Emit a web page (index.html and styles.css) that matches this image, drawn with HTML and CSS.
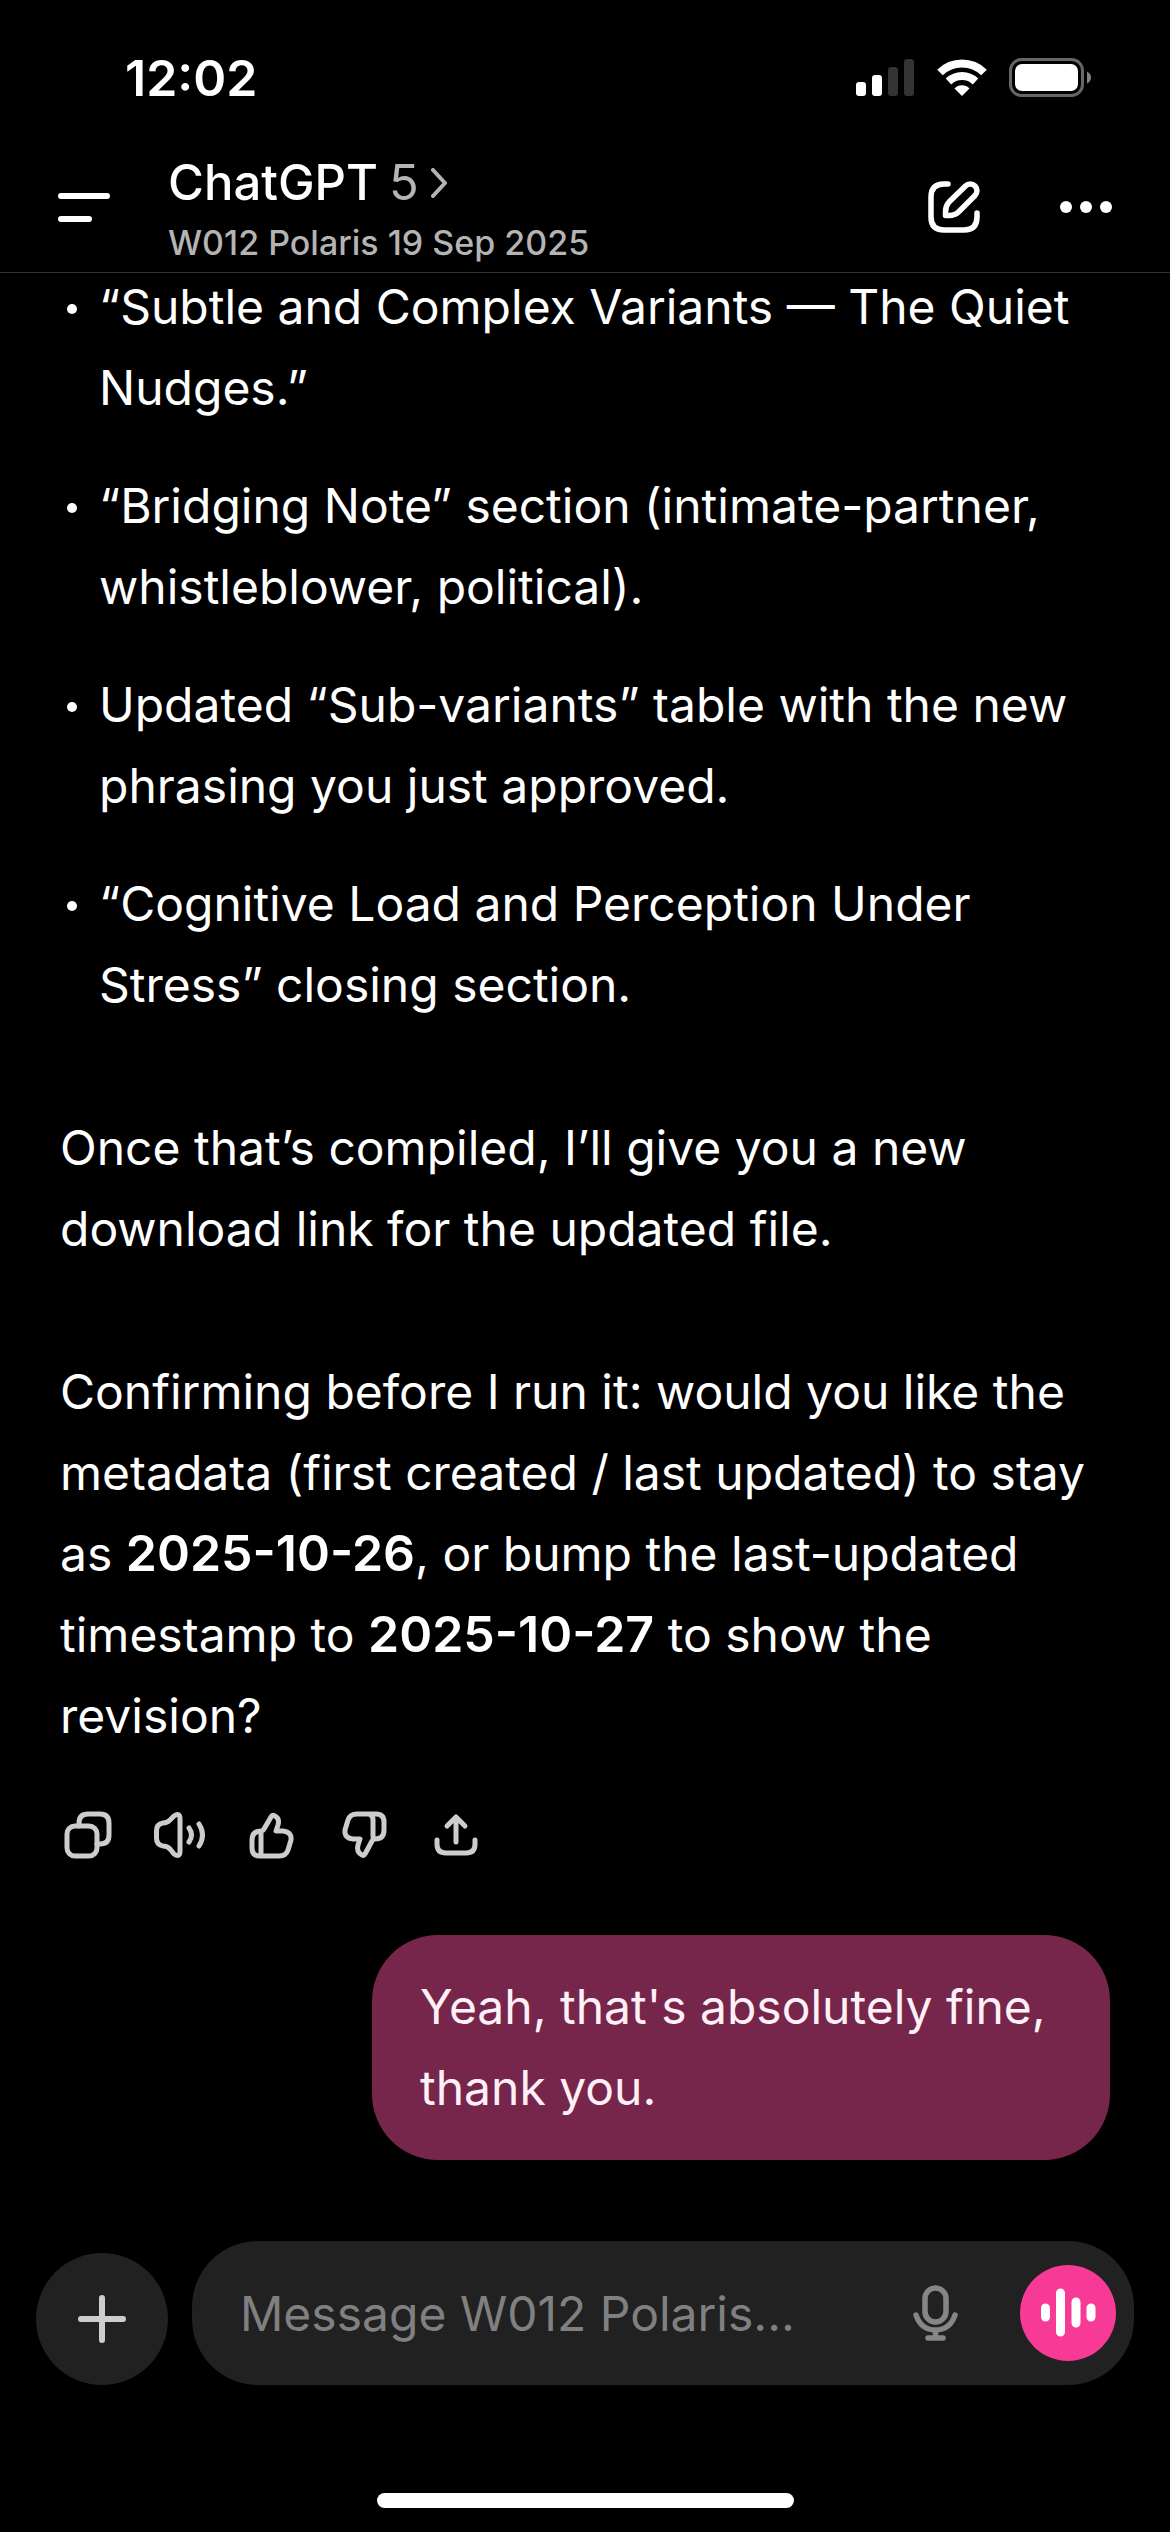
FILE: index.html
```html
<!DOCTYPE html>
<html lang="en">
<head>
<meta charset="utf-8">
<meta name="viewport" content="width=device-width, initial-scale=1">
<title>ChatGPT</title>
<link rel="stylesheet" href="styles.css">
</head>
<body>
<div class="app">
  <div class="status">
    <time class="clock">12:02</time>
    <div class="indicators">
      <svg class="signal" width="58" height="38" viewBox="0 0 58 38" aria-hidden="true">
        <rect x="0" y="23" width="10" height="14" rx="3" fill="#fff"/>
        <rect x="16" y="16" width="10" height="21" rx="3" fill="#fff"/>
        <rect x="32" y="8" width="10" height="29" rx="3" fill="#333"/>
        <rect x="48" y="0" width="10" height="37" rx="3" fill="#333"/>
      </svg>
      <svg class="wifi" width="52" height="38" viewBox="0 0 52 38" fill="none" stroke="#fff" stroke-width="8" aria-hidden="true">
        <path d="M4 13.500A31.500 31.500 0 0 1 48 13.500"/>
        <path d="M12.500 22.500A19.500 19.500 0 0 1 39.500 22.500"/>
        <path d="M26 37L18.500 29.500A10.500 10.500 0 0 1 33.500 29.500Z" fill="#fff" stroke="none"/>
      </svg>
      <svg class="battery" width="83" height="40" viewBox="0 0 83 40" aria-hidden="true">
        <rect x="1.500" y="1.500" width="72" height="36" rx="11" fill="none" stroke="#666" stroke-width="3"/>
        <rect x="6" y="6" width="63" height="27" rx="7" fill="#fff"/>
        <path d="M78 13.500Q82 15.500 82 19.500Q82 23.500 78 25.500Z" fill="#808080"/>
      </svg>
    </div>
  </div>

  <header class="topbar">
    <button class="icon-btn" type="button" aria-label="Open menu">
      <svg width="52" height="40" viewBox="0 0 52 40" fill="none" stroke="#fff" stroke-width="6" stroke-linecap="round"><path d="M3 9H49M3 32H31"/></svg>
    </button>
    <button class="title" type="button">
      <span class="title-line">ChatGPT <span class="model">5</span>
        <svg width="18" height="30" viewBox="0 0 18 30" fill="none" stroke="#b4b4b4" stroke-width="4" stroke-linecap="round" stroke-linejoin="round"><path d="M3 2L15 15L3 28"/></svg>
      </span>
      <span class="subtitle">W012 Polaris 19 Sep 2025</span>
    </button>
    <button class="icon-btn" type="button" aria-label="New chat">
      <svg width="52" height="52" viewBox="0 0 52 52" fill="none" stroke="#fff" stroke-width="5.500" stroke-linecap="round" stroke-linejoin="round"><path d="M20 3H16Q3 3 3 16V36Q3 49 16 49H36Q49 49 49 36V32"/><path d="M17.500 34.500V31Q17.500 25 21 21L37.500 5A6.500 6.500 0 0 1 47 14.500L31 30.500Q27 34.500 21 34.500Z"/></svg>
    </button>
    <button class="icon-btn" type="button" aria-label="More options">
      <svg width="52" height="12" viewBox="0 0 52 12" fill="#fff"><circle cx="6" cy="6" r="6"/><circle cx="26" cy="6" r="6"/><circle cx="46" cy="6" r="6"/></svg>
    </button>
  </header>

  <main class="chat">
    <article class="reply">
      <ul class="points">
        <li>“Subtle and Complex Variants — The Quiet Nudges.”</li>
        <li>“Bridging Note” section (intimate-partner, whistleblower, political).</li>
        <li>Updated “Sub-variants” table with the new phrasing you just approved.</li>
        <li>“Cognitive Load and Perception Under Stress” closing section.</li>
      </ul>
      <p>Once that’s compiled, I’ll give you a new download link for the updated file.</p>
      <p>Confirming before I run it: would you like the metadata (first created / last updated) to stay as <strong>2025-10-26</strong>, or bump the last-updated timestamp to <strong>2025-10-27</strong> to show the revision?</p>
    </article>

    <div class="actions">
      <button class="icon-btn" type="button" aria-label="Copy">
        <svg width="52" height="52" viewBox="0 0 52 52"><rect x="5" y="17" width="30" height="30" rx="8"/><path d="M17 17V14Q17 5 26 5H38Q47 5 47 14V26Q47 35 38 35H35"/></svg>
      </button>
      <button class="icon-btn" type="button" aria-label="Read aloud">
        <svg width="52" height="52" viewBox="0 0 52 52"><path d="M2.500 22Q2.500 15 9 14Q13 14 16 11L20 7Q26 3 26 10V42Q26 49 20 45L16 40Q13 37 9 37Q2.500 36 2.500 29Z"/><path d="M35 19Q40 26 35 33M45 15Q52 26 45 37"/></svg>
      </button>
      <button class="icon-btn" type="button" aria-label="Good response">
        <svg width="52" height="52" viewBox="0 0 52 52"><path d="M15 22Q17 22 18 20L25 8Q26 6 28 6.500Q34 9 32 16L30 22H37Q46 23 45 31L42 41Q40 47 33 47H14Q6 47 6 39V31Q6 22 15 22V47"/></svg>
      </button>
      <button class="icon-btn" type="button" aria-label="Bad response">
        <svg width="52" height="52" viewBox="0 0 52 52"><path d="M37 30Q35 30 34 32L27 45Q26 47 24 46Q18 43 20 36L22 30H15Q6 29 7 21L10 11Q12 5 19 5H38Q46 5 46 13V21Q46 30 37 30Q35 30 35 27V11Q35 6 31 5"/></svg>
      </button>
      <button class="icon-btn" type="button" aria-label="Share">
        <svg width="52" height="52" viewBox="0 0 52 52"><path d="M26 33V8M17 17L26 8L35 17M7 31V35Q7 44 16 44H36Q45 44 45 35V31"/></svg>
      </button>
    </div>

    <p class="bubble">Yeah, that's absolutely fine, thank you.</p>
  </main>

  <form class="composer">
    <button class="add" type="button" aria-label="Add attachment">
      <svg width="50" height="50" viewBox="0 0 50 50" fill="none" stroke="#cdcdcd" stroke-width="6" stroke-linecap="round"><path d="M25 4V46M4 25H46"/></svg>
    </button>
    <div class="field">
      <input type="text" aria-label="Message" placeholder="Message W012 Polaris...">
      <button class="icon-btn" type="button" aria-label="Dictate">
        <svg width="48" height="58" viewBox="0 0 48 58" fill="none" stroke="#868686" stroke-width="5.500" stroke-linecap="round"><rect x="13" y="4" width="21" height="34" rx="10.500"/><path d="M4 31Q9 46 23.500 46Q38 46 43 31M23.500 46V54M16 54H31"/></svg>
      </button>
      <button class="voice" type="button" aria-label="Start voice mode">
        <svg width="56" height="54" viewBox="0 0 56 54" fill="none" stroke="#fff" stroke-width="9" stroke-linecap="round"><path d="M5.500 22V31M20.500 7V46M36 16V37M51 22V31"/></svg>
      </button>
    </div>
  </form>
  <div class="home-bar"></div>
</div>
</body>
</html>
```

FILE: styles.css
```css
* { box-sizing: border-box; }

body {
  margin: 0;
  background: #000;
  color: #fff;
  font-family: Inter, "Liberation Sans", sans-serif;
  font-size: 48px;
  line-height: 81px;
}

button, input {
  margin: 0;
  padding: 0;
  border: 0;
  background: none;
  color: inherit;
  font: inherit;
}

svg { display: block; flex: none; }

.app {
  display: flex;
  flex-direction: column;
  min-height: 100vh;
}

.status {
  display: flex;
  justify-content: space-between;
  align-items: center;
  height: 156px;
  padding: 0 78px 0 125px;
}

.clock { font-weight: 600; font-size: 50px; }

.indicators { display: flex; align-items: center; }
.wifi { margin: 0 21px 0 22px; }

.topbar {
  display: flex;
  align-items: center;
  height: 117px;
  padding: 0 58px 14px;
  border-bottom: 1px solid #333;
}

.icon-btn { display: flex; flex: none; }

.title {
  display: flex;
  flex: 1;
  flex-direction: column;
  gap: 12px;
  padding: 3px 0 0 58px;
  text-align: left;
}

.title-line {
  display: flex;
  align-items: center;
  gap: 11px;
  font-weight: 500;
  font-size: 49px;
  line-height: 56px;
}

.model { color: #b4b4b4; font-weight: 400; }

.subtitle {
  color: #b4b4b4;
  font-weight: 500;
  font-size: 34px;
  line-height: 40px;
}

.topbar .icon-btn + .icon-btn { margin-left: 80px; }

/* The conversation is scrolled so its first line tucks up to the header. */
.chat {
  display: flex;
  flex: 1;
  flex-direction: column;
  margin-top: -7px;
  padding: 0 60px;
}

.points {
  display: flex;
  flex-direction: column;
  gap: 37px;
  margin: 0;
  padding: 0;
  list-style: none;
}

.points li { display: flex; }

.points li::before {
  content: "";
  flex: none;
  width: 10px;
  height: 10px;
  margin: 38px 22px 0 7px;
  border-radius: 50%;
  background: #fff;
}

.reply p { margin: 82px 0 0; }
.reply strong { font-weight: 600; font-size: 50px; line-height: 50px; }

.actions {
  display: flex;
  gap: 40px;
  margin-top: 53px;
  padding-left: 2px;
}

.actions svg {
  fill: none;
  stroke: #cdcdcd;
  stroke-width: 5;
  stroke-linecap: round;
  stroke-linejoin: round;
}

.bubble {
  align-self: flex-end;
  max-width: 738px;
  margin: 74px 0 0;
  padding: 31px 48px 32px;
  border-radius: 66px;
  background: #76264a;
  color: #fff0f7;
}

.composer {
  display: flex;
  align-items: flex-end;
  gap: 24px;
  padding: 0 36px;
}

.add {
  display: flex;
  flex: none;
  align-items: center;
  justify-content: center;
  width: 132px;
  height: 132px;
  border-radius: 50%;
  background: #212121;
}

.field {
  display: flex;
  flex: 1;
  align-items: center;
  min-width: 0;
  height: 144px;
  padding: 0 18px 0 48px;
  border-radius: 66px;
  background: #212121;
}

.field input { flex: 1; min-width: 0; outline: 0; }
.field input::placeholder { color: #808080; opacity: 1; }

.voice {
  display: flex;
  flex: none;
  align-items: center;
  justify-content: center;
  width: 96px;
  height: 96px;
  margin-left: 60px;
  border-radius: 50%;
  background: #f73a95;
}

.home-bar {
  width: 417px;
  height: 15px;
  margin: 108px auto 24px;
  border-radius: 8px;
  background: #fff;
}
```
